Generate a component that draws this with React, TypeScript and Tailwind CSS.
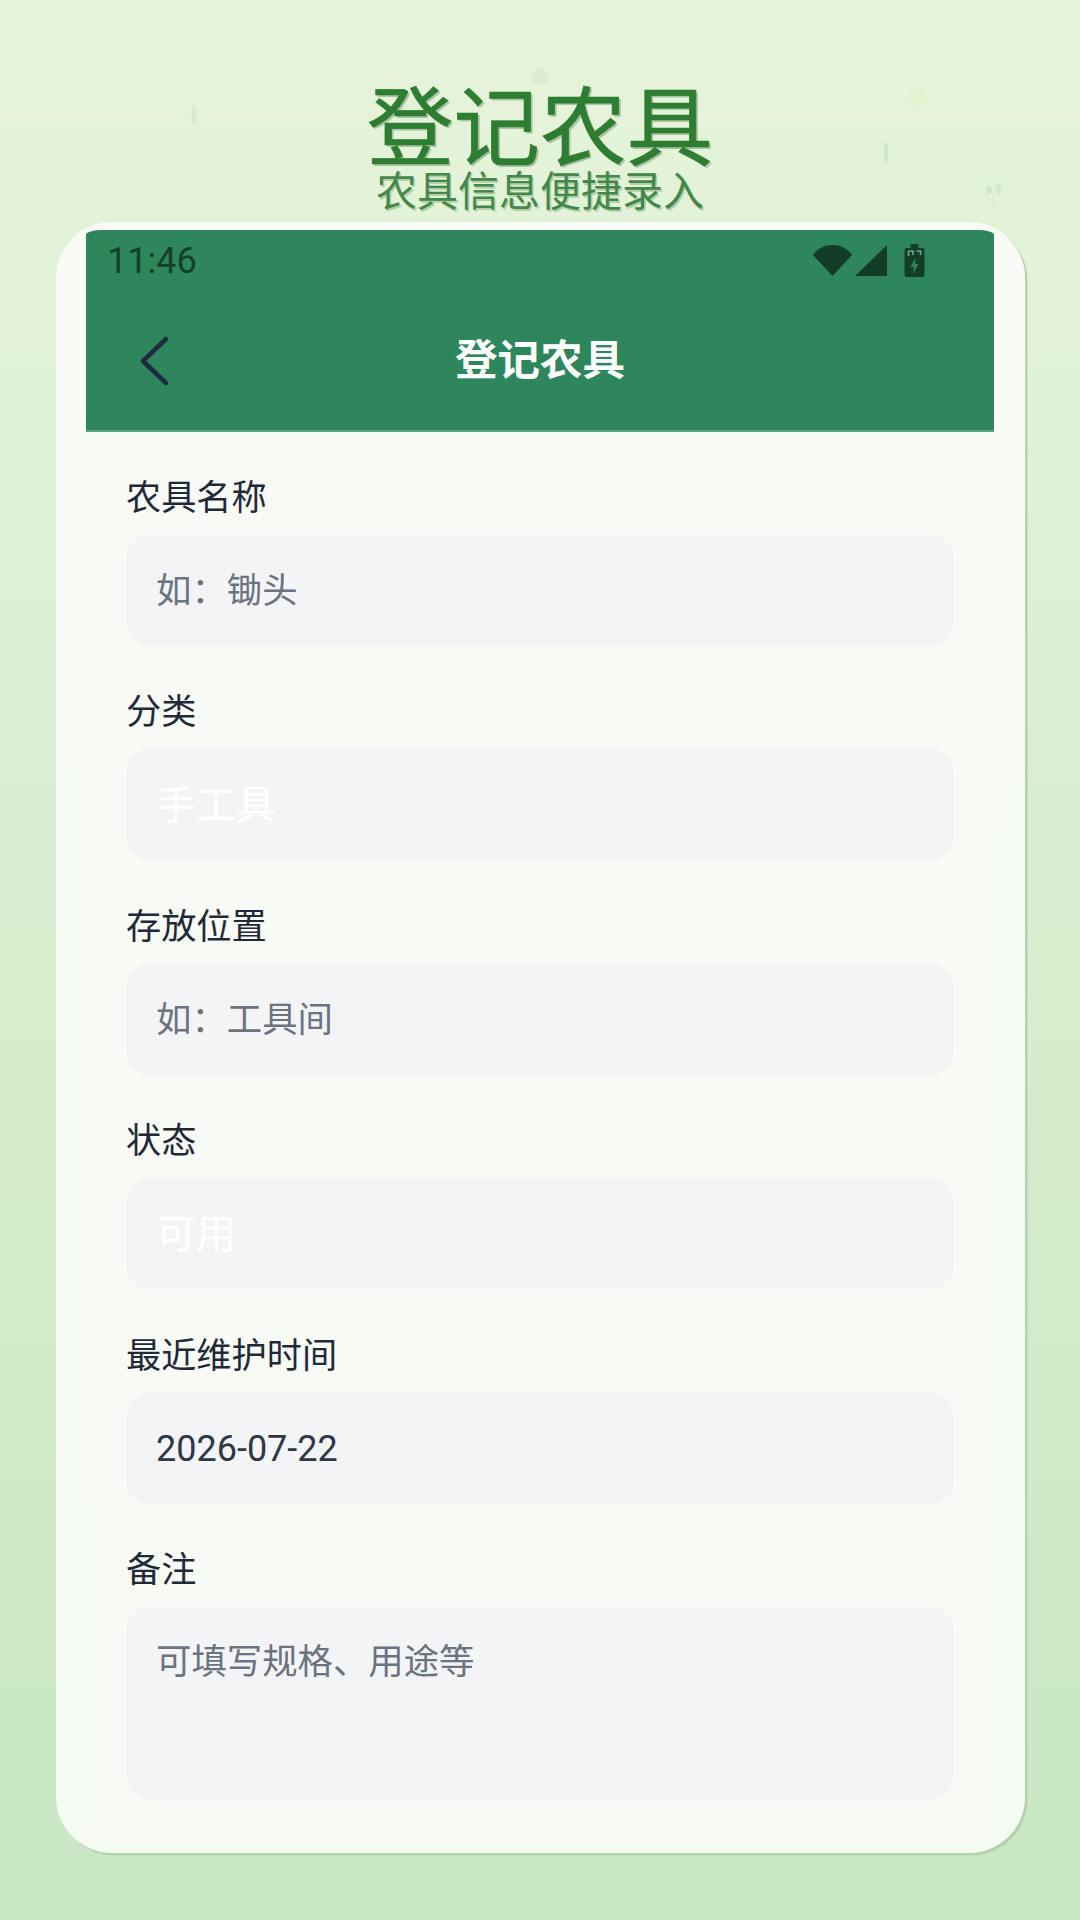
const cjk = "font-['Roboto','Noto_Sans_CJK_SC',sans-serif]";

function Field({ label, value, tone, tall }: { label: string; value: string; tone: string; tall?: boolean }) {
  return (
    <div className="flex flex-col">
      <div className="h-[52px] text-[35.2px] leading-[52px] text-[#1f2937]">{label}</div>
      <div
        className={
          tall
            ? "mt-[11px] h-[192px] rounded-[24px] bg-[#f3f4f6] px-[30px] py-[30px] leading-[50px] " + tone
            : "mt-[11px] flex h-[111px] items-center rounded-[24px] bg-[#f3f4f6] px-[30px] pt-[2px] " + tone
        }
      >
        {value}
      </div>
    </div>
  );
}

export default function App() {
  return (
    <div className={"relative flex h-[1920px] w-[1080px] flex-col overflow-hidden bg-gradient-to-b from-[#e6f4da] to-[#c8e7c3] " + cjk}>
      <svg className="absolute left-[528px] top-[67px]" width="24" height="16" viewBox="0 0 24 16">
        <path d="M12 0 L24 8 H19 V16 H5 V8 H0 Z" fill="#dcecd3" />
      </svg>
      <svg className="absolute left-[190px] top-[103px]" width="8" height="25" viewBox="0 0 8 25">
        <path d="M4 0 Q9 12 4 25 Q-1 12 4 0 Z" fill="#d7ebd0" />
      </svg>
      <svg className="absolute left-[882px] top-[140px]" width="8" height="26" viewBox="0 0 8 26">
        <path d="M4 0 Q9 13 4 26 Q-1 13 4 0 Z" fill="#d2e7ca" />
      </svg>
      <div className="absolute left-[909px] top-[87px] h-[19px] w-[19px] rounded-full bg-[#e5f2cf]" />
      <svg className="absolute left-[986px] top-[183px]" width="16" height="25" viewBox="0 0 16 25">
        <path d="M7.5 6 V25" stroke="#d5e8cd" strokeWidth="1" fill="none" />
        <ellipse cx="3" cy="7" rx="3" ry="4.5" fill="#d5e8cd" />
        <ellipse cx="12.5" cy="6" rx="3" ry="6" fill="#d5e8cd" />
      </svg>

      <div className="mt-[88px] text-center text-[86.5px] leading-[84px] text-[#2e7d32] [-webkit-text-stroke:0.7px_#2e7d32] [text-shadow:2px_2px_0_#a9c4a2]">登记农具</div>
      <div className="text-center text-[41px] leading-[40px] text-[#43884a] [text-shadow:1.5px_1.5px_0_#b4d0aa]">农具信息便捷录入</div>

      <div className="ml-[56px] mt-[10px] flex h-[1631px] w-[969px] flex-col rounded-[56px] bg-gradient-to-b from-[#f9fcf6] to-[#f3fbf2] pb-[10px] pl-[30px] pr-[31px] pt-[8px] shadow-[2.5px_2.5px_0_#b5d2af]">
        <div className="flex flex-1 flex-col overflow-hidden rounded-[16px/5px] bg-[#f7faf5]">
          <div className="flex h-[202px] flex-col border-b-[2px] border-[#5fa582] bg-[#2e875c]">
            <div className="flex h-[61px] items-center justify-between pl-[21px] pr-[69px]">
              <span className="text-[36px] leading-[42px] text-[#14402a]">11:46</span>
              <div className="flex items-center gap-[3px]">
                <svg width="39" height="31" viewBox="0 0 39 31">
                  <path d="M0 10 C5 3 12 0 19.5 0 C27 0 34 3 39 10 L19.5 31 Z" fill="#133d29" />
                </svg>
                <svg width="32" height="31" viewBox="0 0 32 31">
                  <path d="M32 0 V31 H0 Z" fill="#133d29" />
                </svg>
                <svg className="ml-[14px]" width="21" height="33" viewBox="0 0 20 33">
                  <path d="M6 0 H14 V4 H18 Q20 4 20 6 V31 Q20 33 18 33 H2 Q0 33 0 31 V6 Q0 4 2 4 H6 Z" fill="#133d29" />
                  <path d="M11 14 L6 23 H9.5 L8.5 30 L14 20 H10.5 Z" fill="#2e875c" />
                  <path d="M4 7 H9 M4 7 V12 M12 7 H16 V11 M9 7 L8 11" stroke="#6fa98c" strokeWidth="1.6" fill="none" />
                </svg>
              </div>
            </div>
            <div className="relative flex flex-1 items-center justify-center">
              <svg className="absolute left-[53px] top-[45px]" width="30" height="50" viewBox="0 0 30 50">
                <path d="M27 3 L4 25 L27 47" fill="none" stroke="#1f2a44" strokeWidth="4.5" strokeLinecap="round" strokeLinejoin="round" />
              </svg>
              <span className="text-[42.5px] font-bold leading-[56px] text-white">登记农具</span>
            </div>
          </div>
          <div className="flex flex-col gap-[40.4px] pl-[40px] pr-[40px] pt-[40px]">
            <Field label="农具名称" value={"如\uFF1A锄头"} tone="text-[35.4px] text-[#6b7280]" />
            <Field label="分类" value="手工具" tone="text-[40px] text-white" />
            <Field label="存放位置" value={"如\uFF1A工具间"} tone="text-[35.4px] text-[#6b7280]" />
            <Field label="状态" value="可用" tone="text-[40px] text-white" />
            <Field label="最近维护时间" value="2026-07-22" tone="text-[36px] text-[#2d3748]" />
            <Field label="备注" value="可填写规格、用途等" tone="text-[35.4px] text-[#6b7280]" tall />
          </div>
        </div>
      </div>
    </div>
  );
}
